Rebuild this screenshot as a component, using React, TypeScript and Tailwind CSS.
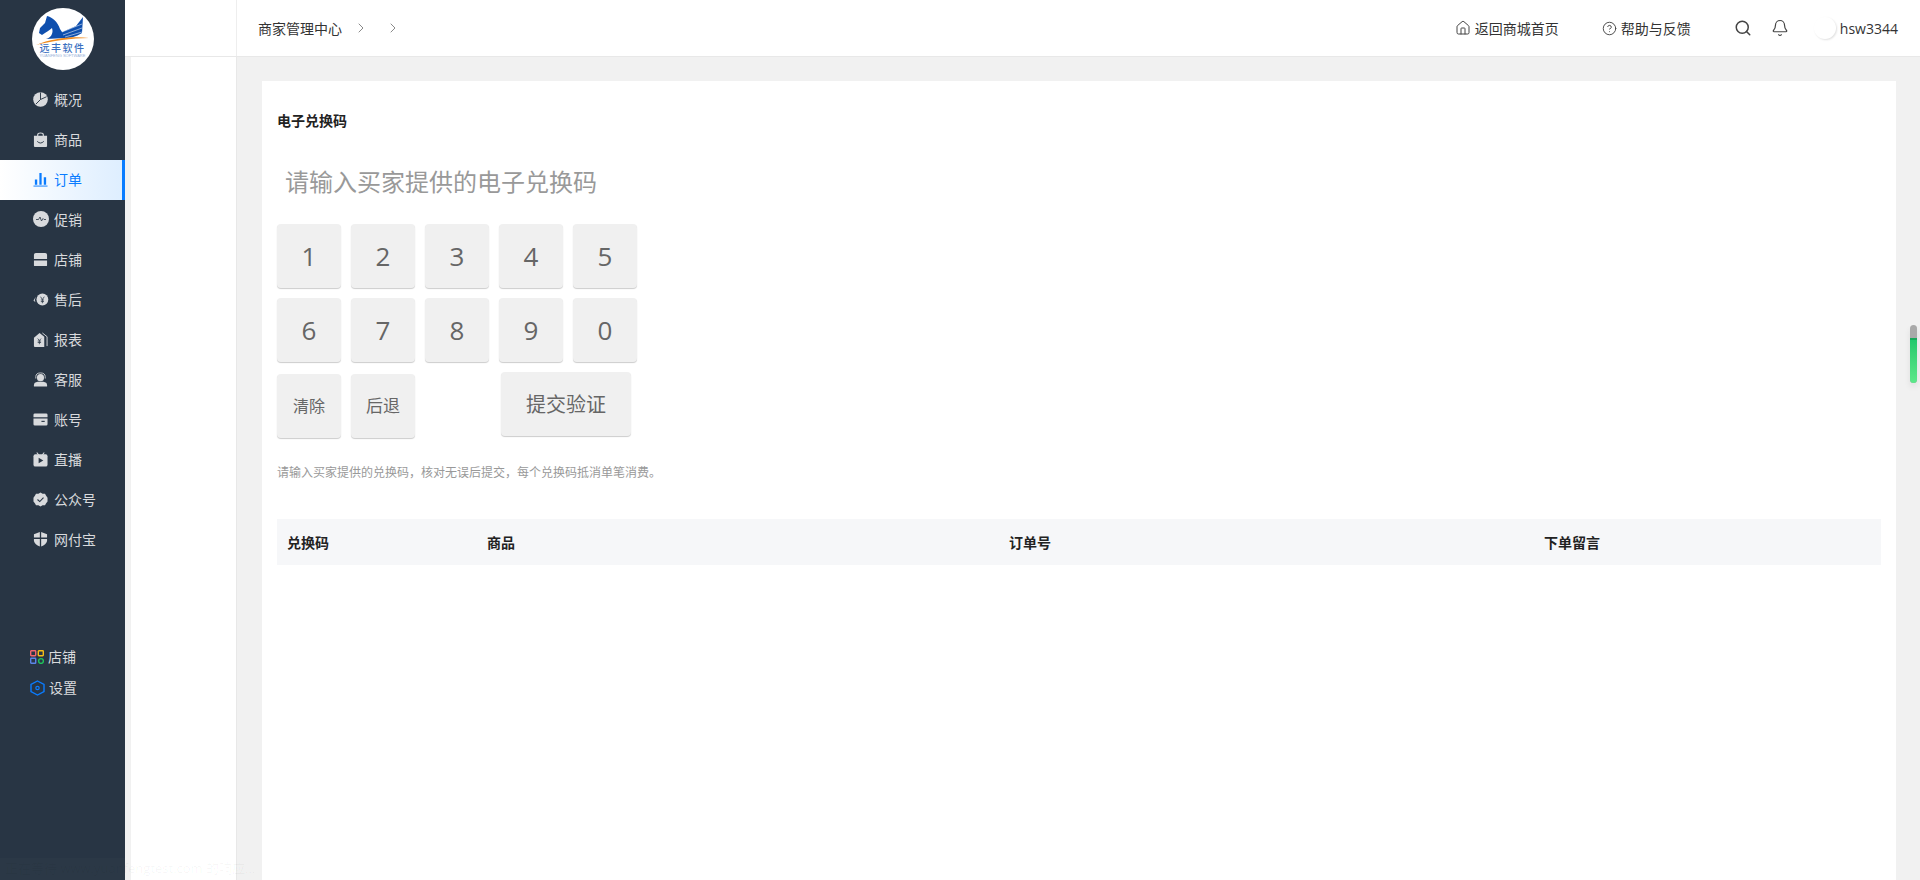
import React from "react";
import { Home, HelpCircle, Search, Bell, ChevronRight } from "lucide-react";

const FONT = "font-['Open_Sans','Noto_Sans_CJK_SC',sans-serif]";

const Logo = () => (
  <div className="relative h-[62px] w-[62px] overflow-hidden rounded-full bg-white">
    <svg viewBox="0 0 62 62" className="h-full w-full">
      <path d="M7 25 L8 20 L13 15 L15 8 C20 9 26 14 28 21 L30 24 L44 18 L51 9 L50 25 C44 29 38 30 33 30 L14 31 C18 30 22 26 20 20 C18 22 14 24 10 27 Z" fill="#0f4fae" />
      <path d="M30 24 L50 16 M31 27 L50 20 M33 29 L50 24" stroke="#ffffff" strokeWidth="0.7" opacity="0.75" />
      <path d="M4 37 C20 30 42 28 57 30 C40 30 20 33 4 37 Z" fill="#f08a1d" />
    </svg>
    <div className="absolute left-0 right-0 top-[34px] text-center font-['Noto_Sans_CJK_SC',sans-serif] text-[10px] font-medium leading-[12px] tracking-[1.5px] text-[#3a6fc0]">
      远丰软件
    </div>
    <div className="absolute left-0 right-0 top-[45px] text-center font-['Liberation_Sans',sans-serif] text-[4px] leading-[6px] text-[#9ab2d8]">
      YUANFENG SOFTWARE
    </div>
  </div>
);

const c = "#d8dadd";
const icons: Record<string, React.ReactNode> = {
  概况: (
    <svg viewBox="0 0 16 16" className="h-[15px] w-[15px]">
      <circle cx="8" cy="8" r="7.8" fill={c} />
      <path d="M8 0.5 V8 L3 13 M8 8 L14.5 5" stroke="#283544" strokeWidth="1" fill="none" />
    </svg>
  ),
  商品: (
    <svg viewBox="0 0 16 16" className="h-[15px] w-[15px]">
      <path d="M1 4 H15 V15 Q15 16 14 16 H2 Q1 16 1 15 Z" fill={c} />
      <path d="M5 5 V3 Q5 1 8 1 Q11 1 11 3 V5" stroke={c} strokeWidth="1.2" fill="none" />
      <path d="M4.5 10 Q8 13.5 11.5 10" stroke="#283544" strokeWidth="1" fill="none" />
    </svg>
  ),
  订单: (
    <svg viewBox="0 0 16 16" className="h-[15px] w-[15px]">
      <path d="M0.5 15 H15.5" stroke="#0a7cff" strokeWidth="1" />
      <path d="M2 8 H4.5 V13.5 H2 Z M6.8 1 H9.2 V13.5 H6.8 Z M11.5 5.5 H14 V13.5 H11.5 Z" fill="#0a7cff" />
    </svg>
  ),
  促销: (
    <svg viewBox="0 0 16 16" className="h-[16px] w-[16px]">
      <circle cx="8" cy="8" r="8" fill={c} />
      <path d="M3 8.5 H5.5 L7 6 L8.5 10 L10 7.5 L11 8.5 H13" stroke="#283544" strokeWidth="0.8" fill="none" />
    </svg>
  ),
  店铺: (
    <svg viewBox="0 0 16 16" className="h-[15px] w-[15px]">
      <path d="M3 1 H13 Q15 1 15 3 V7.5 H1 V3 Q1 1 3 1 Z M1 9 H15 V14 Q15 15 14 15 H2 Q1 15 1 14 Z" fill={c} />
    </svg>
  ),
  售后: (
    <svg viewBox="0 0 16 16" className="h-[15px] w-[16px]">
      <circle cx="9.5" cy="8" r="6.3" fill={c} />
      <path d="M2.5 5 A7 7 0 0 0 2 11 L0 9 Z" fill={c} />
      <path d="M7.5 5 L9.5 8 L11.5 5 M9.5 8 V12 M7.8 8.5 H11.2 M7.8 10.2 H11.2" stroke="#283544" strokeWidth="0.8" fill="none" />
    </svg>
  ),
  报表: (
    <svg viewBox="0 0 16 16" className="h-[15px] w-[15px]">
      <path d="M1 6 L7 1 L12 5 V16 H2 Q1 16 1 15 Z" fill={c} />
      <path d="M10 1 L15 5 V15" stroke={c} strokeWidth="1" fill="none" />
      <path d="M5 7 L6.8 9 L8.6 7 M6.8 9 V13 M5 9.6 H8.6 M5 11.2 H8.6" stroke="#283544" strokeWidth="0.8" fill="none" />
    </svg>
  ),
  客服: (
    <svg viewBox="0 0 16 16" className="h-[15px] w-[15px]">
      <circle cx="8" cy="6" r="3.8" fill={c} />
      <path d="M3 7 V5 Q3 1 8 1 Q13 1 13 5 V7" stroke={c} strokeWidth="0.9" fill="none" />
      <path d="M1 15.5 V14 Q1 11 5 10.5 H11 Q15 11 15 14 V15.5 Z" fill={c} />
    </svg>
  ),
  账号: (
    <svg viewBox="0 0 16 16" className="h-[15px] w-[15px]">
      <path d="M2 1.5 H14 Q15.5 1.5 15.5 3 V5.5 H0.5 V3 Q0.5 1.5 2 1.5 Z M0.5 7 H15.5 V13 Q15.5 14.5 14 14.5 H2 Q0.5 14.5 0.5 13 Z" fill={c} />
      <path d="M9 10 H12.5" stroke="#283544" strokeWidth="1.2" />
    </svg>
  ),
  直播: (
    <svg viewBox="0 0 16 16" className="h-[15px] w-[15px]">
      <path d="M4 0.5 L6 3 M12 0.5 L10 3" stroke={c} strokeWidth="1.1" />
      <rect x="0.5" y="2.5" width="15" height="13" rx="2" fill={c} />
      <path d="M6 6 L11 9 L6 12 Z" fill="#283544" />
    </svg>
  ),
  公众号: (
    <svg viewBox="0 0 16 16" className="h-[15px] w-[15px]">
      <path d="M8 0.5 L10.2 1.8 L12.8 1.8 L14 4 L15.5 6 L15.5 10 L14 12 L12.8 14.2 L10.2 14.2 L8 15.5 L5.8 14.2 L3.2 14.2 L2 12 L0.5 10 L0.5 6 L2 4 L3.2 1.8 L5.8 1.8 Z" fill={c} />
      <path d="M4.8 8 L7.2 10.2 L11.2 6" stroke="#283544" strokeWidth="1.2" fill="none" />
    </svg>
  ),
  网付宝: (
    <svg viewBox="0 0 16 16" className="h-[16px] w-[15px]">
      <path d="M7.3 0.5 V6.5 H1 V3 Z M8.7 0.5 L15 3 V6.5 H8.7 Z M1 8 H7.3 V16 Q2 14 1 10 Z M8.7 8 H15 V10 Q14 14 8.7 16 Z" fill={c} />
    </svg>
  ),
};

const menu = ["概况", "商品", "订单", "促销", "店铺", "售后", "报表", "客服", "账号", "直播", "公众号", "网付宝"];

const Sidebar = () => (
  <aside className="flex h-full w-[125px] shrink-0 flex-col bg-[#283544]">
    <div className="flex h-20 justify-center pt-2">
      <Logo />
    </div>
    <nav className="flex flex-col">
      {menu.map((item) => {
        const active = item === "订单";
        return (
          <div
            key={item}
            className={
              active
                ? "flex h-10 items-center border-r-[3px] border-[#0a7cff] bg-gradient-to-r from-white to-[#deeeff] pb-[2px] pl-[33px] text-[#0a7cff]"
                : "flex h-10 items-center pb-[2px] pl-[33px] text-[#d8dadd]"
            }
          >
            <span className="flex w-[21px] shrink-0 items-center">{icons[item]}</span>
            <span className="text-[14px]">{item}</span>
          </div>
        );
      })}
    </nav>
    <div className="mt-[81px] flex flex-col pl-[30px] text-[14px] text-[#d8dadd]">
      <div className="flex h-[31px] items-center gap-[4px]">
        <svg viewBox="0 0 14 14" className="h-[14px] w-[14px]">
          <rect x="0.7" y="0.7" width="5" height="5" rx="0.6" fill="none" stroke="#f0656d" strokeWidth="1.4" />
          <rect x="8.3" y="0.7" width="5" height="5" rx="0.6" fill="none" stroke="#f5bd17" strokeWidth="1.4" />
          <rect x="0.7" y="8.3" width="5" height="5" rx="0.6" fill="none" stroke="#5a84e8" strokeWidth="1.4" />
          <circle cx="11" cy="11" r="2.4" fill="none" stroke="#1fc35c" strokeWidth="1.4" />
        </svg>
        店铺
      </div>
      <div className="flex h-[31px] items-center gap-[4px]">
        <svg viewBox="0 0 15 16" className="h-[16px] w-[15px]">
          <path d="M7.5 1 L14 4.5 V11.5 L7.5 15 L1 11.5 V4.5 Z" fill="none" stroke="#0a7cff" strokeWidth="1.4" />
          <circle cx="7.5" cy="8" r="1.7" fill="none" stroke="#0a7cff" strokeWidth="1.2" />
        </svg>
        设置
      </div>
    </div>
  </aside>
);

const Header = () => (
  <header className="flex h-[57px] shrink-0 items-center border-b border-[#e8e8e8] bg-white text-[14px] text-[#333]">
    <div className="h-full w-[112px] shrink-0 border-r border-[#eeeeee]" />
    <div className="flex items-center pl-[21px]">
      商家管理中心
      <ChevronRight className="ml-[11px] h-[16px] w-[16px] text-[#777]" strokeWidth={1.3} />
      <ChevronRight className="ml-[16px] h-[16px] w-[16px] text-[#777]" strokeWidth={1.3} />
    </div>
    <div className="ml-auto flex items-center pr-[22px]">
      <Home className="mr-[4px] h-[16px] w-[16px] text-[#444]" strokeWidth={1.5} />
      返回商城首页
      <HelpCircle className="ml-[43px] mr-[4px] h-[15px] w-[15px] text-[#444]" strokeWidth={1.5} />
      帮助与反馈
      <Search className="ml-[43px] h-[18px] w-[18px] text-[#444]" strokeWidth={2} />
      <Bell className="ml-[19px] h-[18px] w-[18px] text-[#444]" strokeWidth={1.6} />
      <div className="ml-[25px] h-[22px] w-[22px] rounded-full bg-white shadow-[1px_1px_2px_rgba(0,0,0,0.12)]" />
      <span className="ml-[4px]">hsw3344</span>
    </div>
  </header>
);

const Key = ({ label, size }: { label: string; size: string }) => (
  <button
    className={`flex h-16 w-16 items-center justify-center rounded-[4px] bg-[#f0f0f0] text-[#666] shadow-[0_1px_1px_rgba(0,0,0,0.2)] ${size}`}
  >
    {label}
  </button>
);

const App = () => (
  <div className={`relative flex h-[880px] w-[1920px] overflow-hidden bg-[#f1f1f1] ${FONT}`}>
    <Sidebar />
    <div className="flex min-w-0 flex-1 flex-col">
      <Header />
      <div className="flex min-h-0 flex-1">
        <div className="ml-[6px] w-[106px] shrink-0 border-r border-[#e8e8e8] bg-white" />
        <main className="relative ml-[25px] mr-[24px] mt-6 flex-1 bg-white px-[15px] pt-[30px]">
          <h2 className="text-[14px] font-bold leading-[20px] text-[#222]">电子兑换码</h2>
          <div className="mt-[31px] pl-[8px] text-[24px] leading-[40px] text-[#999]">请输入买家提供的电子兑换码</div>
          <div className="mt-[22px] flex gap-[10px]">
            {["1", "2", "3", "4", "5"].map((k) => (
              <Key key={k} label={k} size="text-[26px]" />
            ))}
          </div>
          <div className="mt-[10px] flex gap-[10px]">
            {["6", "7", "8", "9", "0"].map((k) => (
              <Key key={k} label={k} size="text-[26px]" />
            ))}
          </div>
          <div className="mt-[10px] flex items-start gap-[10px]">
            <div className="mt-[2px]">
              <Key label="清除" size="text-[16px]" />
            </div>
            <div className="mt-[2px]">
              <Key label="后退" size="text-[17px]" />
            </div>
            <button className="ml-[76px] flex h-16 w-[130px] items-center justify-center rounded-[4px] bg-[#f0f0f0] pt-[2px] text-[20px] text-[#666] shadow-[0_1px_1px_rgba(0,0,0,0.2)]">
              提交验证
            </button>
          </div>
          <p className="mt-[26px] text-[12px] leading-[18px] text-[#999]">
            请输入买家提供的兑换码，核对无误后提交，每个兑换码抵消单笔消费。
          </p>
          <div className="mt-[37px] grid h-[46px] grid-cols-[200px_522px_535px_1fr] items-center bg-[#f6f7f9] pl-[10px] text-[14px] font-bold text-[#222]">
            <span>兑换码</span>
            <span>商品</span>
            <span>订单号</span>
            <span>下单留言</span>
          </div>
        </main>
      </div>
    </div>
    {/* floating scroll widget */}
    <div className="absolute left-[1910px] top-[325px] h-[58px] w-[7px] rounded-full bg-[#a9a9a9] shadow-[0_4px_6px_rgba(0,0,0,0.08)]">
      <div className="absolute bottom-0 left-0 right-0 h-[45px] rounded-b-full border-t-2 border-[#17a85a] bg-gradient-to-b from-[#20c96c] to-[#5ce88a]" />
    </div>
    {/* browser status bubble, almost faded out */}
    <div className="absolute bottom-0 left-0 flex h-[22px] w-[262px] items-center bg-white/[0.015] pl-[5px] text-[13px] text-black/[0.04]">
      正在等待 www.yuanfengtest.com 的响应...
    </div>
  </div>
);

export default App;
